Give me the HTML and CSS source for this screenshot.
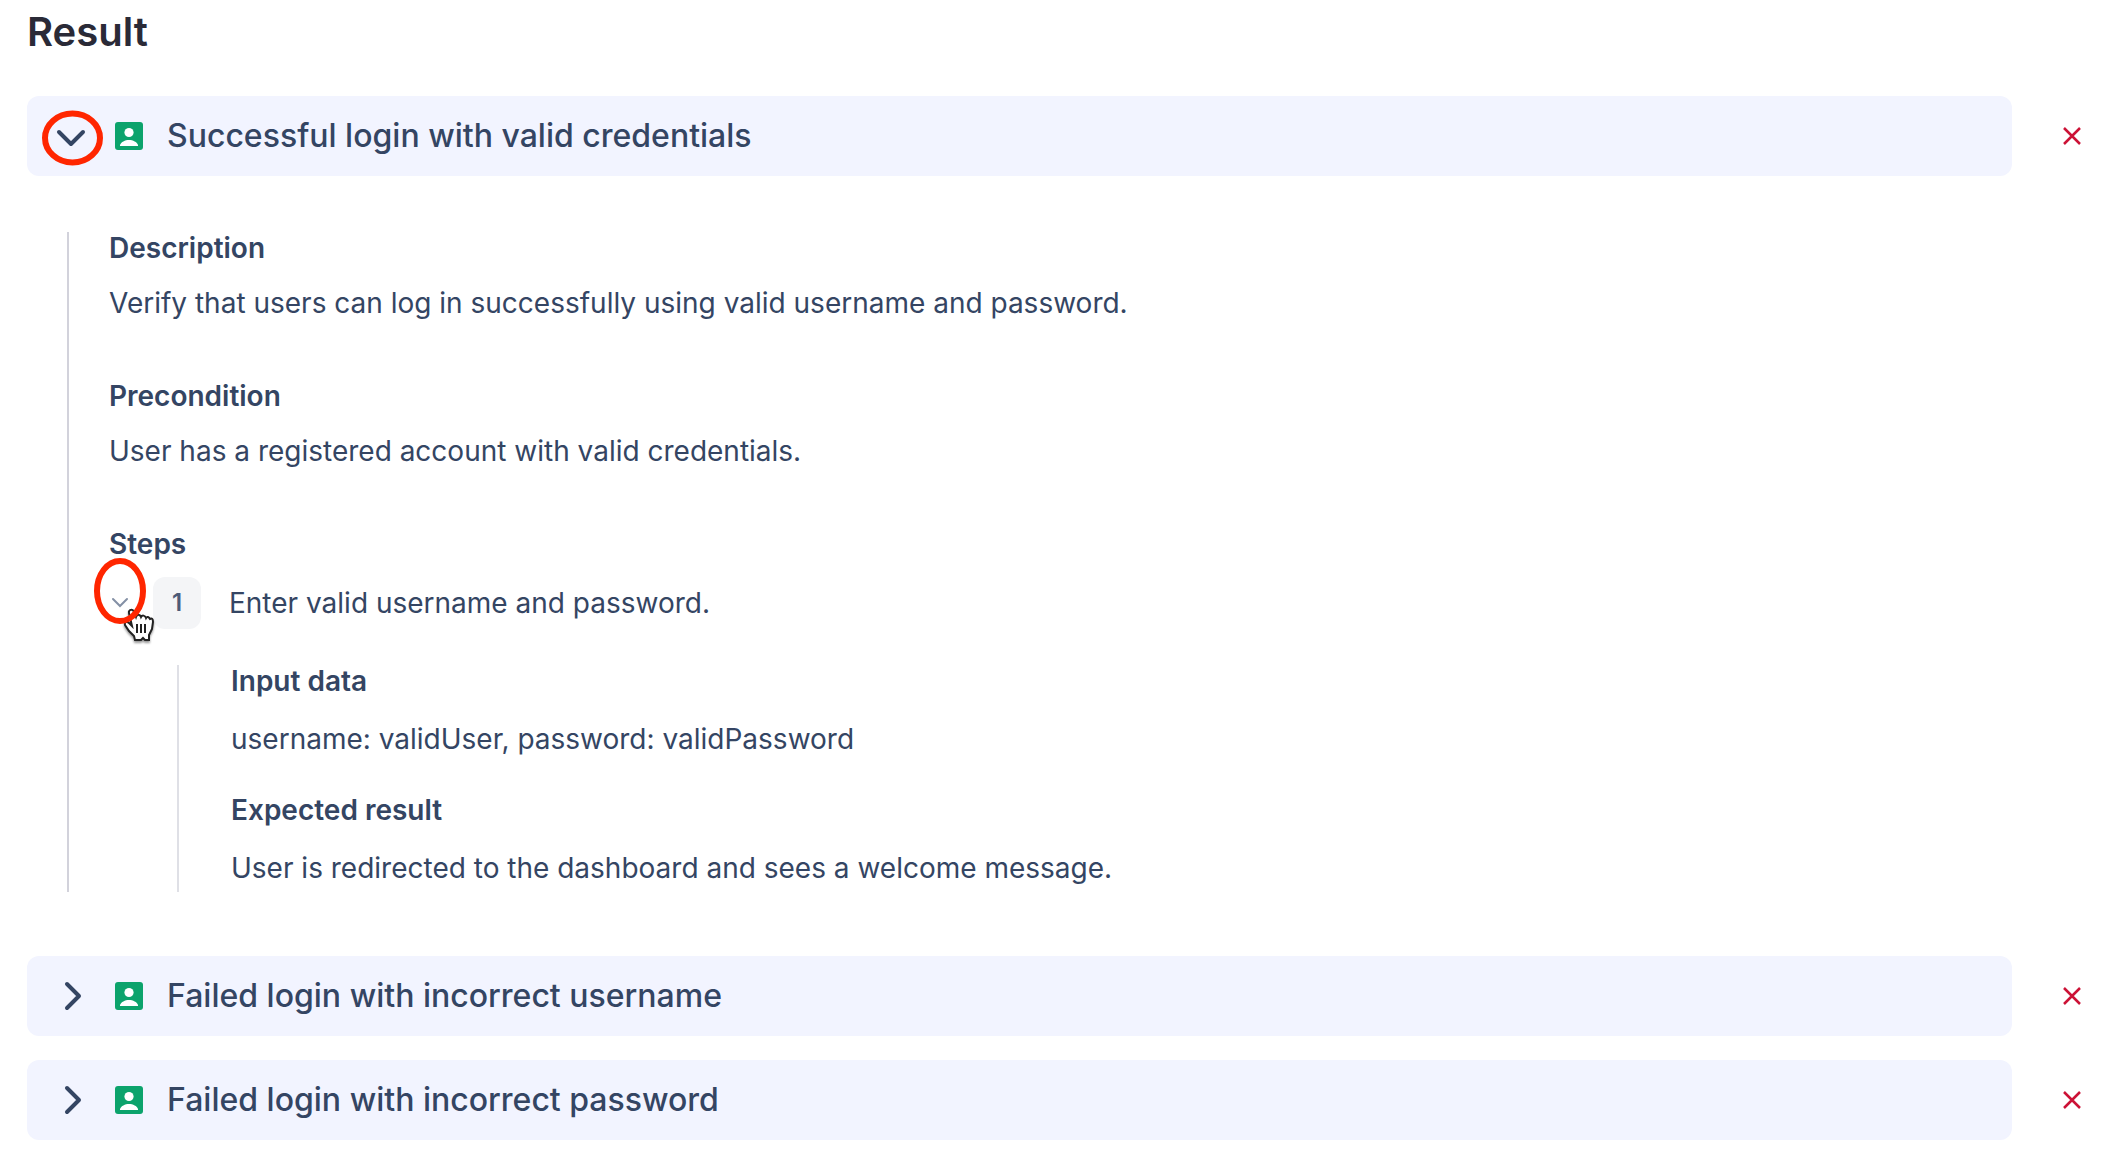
FILE: index.html
```html
<!DOCTYPE html>
<html lang="en">
<head>
<meta charset="utf-8">
<title>Result</title>
<link rel="stylesheet" href="styles.css">
</head>
<body>
<svg class="sprite" aria-hidden="true">
  <symbol id="person" viewBox="0 0 28 28"><rect width="28" height="28" rx="3" fill="#0ca36c"/><circle cx="14" cy="10.500" r="4.600" fill="#fff"/><path d="M5 24v-1c1-3 5-5 9-5s8 2 9 5v1z" fill="#fff"/></symbol>
  <symbol id="down" viewBox="0 0 32 32"><path d="M4 12l12 12 12-12" fill="none" stroke="currentColor" stroke-width="4" stroke-linecap="round" stroke-linejoin="round"/></symbol>
  <symbol id="right" viewBox="0 0 32 32"><path d="M12 4l12 12-12 12" fill="none" stroke="currentColor" stroke-width="4" stroke-linecap="round" stroke-linejoin="round"/></symbol>
  <symbol id="cross" viewBox="0 0 20 20"><path d="M2 2l16 16M18 2L2 18" fill="none" stroke="currentColor" stroke-width="2.500"/></symbol>
</svg>
<main class="page">
  <h1 class="title">Result</h1>
  <section class="case">
    <div class="row">
      <div class="bar">
        <button class="toggle" type="button" aria-expanded="true" aria-label="Collapse case"><svg class="chevron"><use href="#down"/></svg></button>
        <svg class="person"><use href="#person"/></svg>
        <h2 class="name">Successful login with valid credentials</h2>
        <svg class="ring" viewBox="0 0 62 58"><ellipse cx="31.500" cy="29" rx="27.500" ry="24.500"/></svg>
      </div>
      <button class="remove" type="button" aria-label="Remove case"><svg class="cross"><use href="#cross"/></svg></button>
    </div>
    <div class="details">
      <h3 class="label">Description</h3>
      <p class="text">Verify that users can log in successfully using valid username and password.</p>
      <h3 class="label">Precondition</h3>
      <p class="text">User has a registered account with valid credentials.</p>
      <h3 class="label">Steps</h3>
      <div class="step">
        <button class="step-toggle" type="button" aria-expanded="true" aria-label="Collapse step"><svg class="step-chevron" viewBox="0 0 18 18"><path d="M2 5l7 7 7-7"/></svg></button>
        <span class="number">1</span>
        <p class="step-text">Enter valid username and password.</p>
        <svg class="hand" viewBox="0 0 32 34">
          <path d="M7 5c-1-3 4-5 5-1l2 5c1-3 4-3 5 0 1-2 4-2 5 1 1-2 3-1 4 1 2-1 3 0 3 3l-1 7-3 6v5h-4l-2-2-2 2h-6l-1-4-5-5-4-6c-1-3 2-4 4-2l3 3z"/>
          <path d="M15 16v9M19 16v9M23 16v9"/>
        </svg>
        <svg class="step-ring" viewBox="0 0 54 68"><ellipse cx="27" cy="34" rx="23" ry="30"/></svg>
      </div>
      <div class="step-details">
        <h4 class="label">Input data</h4>
        <p class="text">username: validUser, password: validPassword</p>
        <h4 class="label">Expected result</h4>
        <p class="text">User is redirected to the dashboard and sees a welcome message.</p>
      </div>
    </div>
  </section>
  <section class="case row">
    <div class="bar">
      <button class="toggle" type="button" aria-expanded="false" aria-label="Expand case"><svg class="chevron"><use href="#right"/></svg></button>
      <svg class="person"><use href="#person"/></svg>
      <h2 class="name">Failed login with incorrect username</h2>
    </div>
    <button class="remove" type="button" aria-label="Remove case"><svg class="cross"><use href="#cross"/></svg></button>
  </section>
  <section class="case row">
    <div class="bar">
      <button class="toggle" type="button" aria-expanded="false" aria-label="Expand case"><svg class="chevron"><use href="#right"/></svg></button>
      <svg class="person"><use href="#person"/></svg>
      <h2 class="name">Failed login with incorrect password</h2>
    </div>
    <button class="remove" type="button" aria-label="Remove case"><svg class="cross"><use href="#cross"/></svg></button>
  </section>
</main>
</body>
</html>
```
FILE: styles.css
```css
* { box-sizing: border-box; margin: 0; }
body { background: #fff; color: #344563; font-family: Inter, "Liberation Sans", sans-serif; }
button { display: flex; align-items: center; justify-content: center; padding: 0; border: 0; background: none; color: inherit; cursor: pointer; }
.sprite { position: absolute; width: 0; height: 0; }
.page { padding: 8px 20px 20px 27px; }
.title { margin-bottom: 40px; color: #2a2a37; font-size: 40px; font-weight: 600; line-height: 48px; }
.case + .case { margin-top: 24px; }
.row { display: flex; align-items: center; gap: 48px; }
.bar { position: relative; flex: 1; display: flex; align-items: center; height: 80px; padding-left: 28px; border-radius: 12px; background: #f2f4ff; }
.toggle { width: 32px; height: 32px; }
.chevron { width: 32px; height: 32px; }
.person { width: 28px; height: 28px; margin: 0 24px 0 28px; }
.name { font-size: 32px; font-weight: 500; line-height: 40px; }
.remove { width: 24px; height: 24px; color: #cc1236; }
.cross { width: 20px; height: 20px; }
.details { margin: 56px 0 64px 40px; padding-left: 40px; border-left: 2px solid #d2d2db; }
.label { font-size: 28px; font-weight: 600; line-height: 32px; }
.text { margin: 19px 0 57px; font-size: 28px; line-height: 40px; }
.step { position: relative; display: flex; align-items: center; height: 52px; margin-top: 17px; }
.step-toggle { width: 22px; height: 24px; color: #8490a5; }
.step-chevron { width: 18px; height: 18px; fill: none; stroke: currentColor; stroke-width: 2; stroke-linecap: round; }
.number { width: 48px; margin: 0 28px 0 22px; border-radius: 12px; background: #f4f5f7; color: #4c5b78; font-size: 24px; font-weight: 600; line-height: 52px; text-align: center; }
.step-text { font-size: 28px; line-height: 40px; }
.step-details { margin: 36px 0 0 68px; padding: 0 0 4px 52px; border-left: 2px solid #dfe0e6; }
.step-details .text { margin: 22px 0 35px; }
.step-details .text:last-child { margin-bottom: 0; }
.ring, .step-ring { position: absolute; fill: none; stroke: #ff2600; stroke-width: 6; pointer-events: none; }
.ring { left: 14px; top: 13px; width: 62px; height: 58px; }
.step-ring { left: -16px; top: -20px; width: 54px; height: 68px; }
.hand { position: absolute; left: 13px; top: 31px; width: 32px; height: 34px; fill: #fff; stroke: #222; stroke-width: 2; filter: drop-shadow(0 2px 1px #0006); overflow: visible; pointer-events: none; }
```
